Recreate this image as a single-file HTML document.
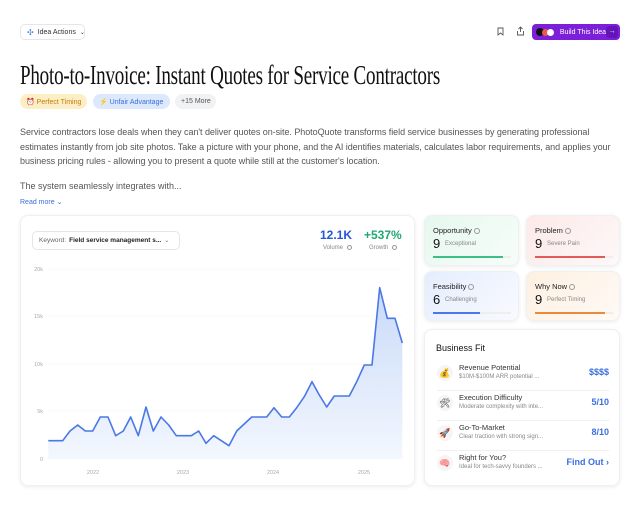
<!DOCTYPE html>
<html><head><meta charset="utf-8"><style>
*{margin:0;padding:0;box-sizing:border-box}
body{width:640px;height:506px;background:#fff;font-family:"Liberation Sans",sans-serif;position:relative;overflow:hidden;color:#222}
.a{position:absolute;white-space:nowrap}
.btn{border:1px solid #e3e6ea;border-radius:5px;background:#fff;font-size:7px;color:#333;display:flex;align-items:center;gap:4px;padding:0 6px;white-space:nowrap}
.tag{position:absolute;top:94px;height:15px;border-radius:8px;font-size:7px;display:flex;align-items:center;padding:0 6px;gap:3px;white-space:nowrap}
.card{position:absolute;border-radius:8px;box-shadow:0 1px 4px rgba(0,0,0,.08);border:1px solid #eef0f2}
.card .t{position:absolute;left:8px;top:10px;font-size:7.5px;color:#222;white-space:nowrap}
.card .n{position:absolute;left:8px;top:20px;font-size:13px;color:#111}
.card .s{position:absolute;left:20px;top:25px;font-size:6px;color:#888;white-space:nowrap}
.card .bar{position:absolute;left:8px;top:40px;width:78px;height:2px;background:#eee}
.card .bar i{display:block;height:2px}
.i{display:inline-block;width:6px;height:6px;border:0.7px solid #999;border-radius:50%;vertical-align:middle;margin-left:2px}
.row{position:absolute;left:12px;width:172px;height:30px;white-space:nowrap}
.row .ic{position:absolute;left:0;top:4px;width:16px;height:16px;border-radius:50%;background:#f5f5f5;font-size:9px;text-align:center;line-height:16px}
.row .h{position:absolute;left:22px;top:2px;font-size:7.5px;color:#333}
.row .d{position:absolute;left:22px;top:13px;font-size:6px;color:#888}
.row .v{position:absolute;right:0;top:6px;font-size:9px;color:#3b6fe0;font-weight:bold}
</style></head><body>
<div class="a btn" style="left:20px;top:24px;width:65px;height:16px"><span style="color:#4a7cf0;font-size:8px">✣</span>Idea Actions <span style="font-size:6px">⌄</span></div>
<svg class="a" style="left:496px;top:27px" width="9" height="9" viewBox="0 0 9 9"><path d="M2 1h5v7L4.5 6 2 8z" fill="none" stroke="#555" stroke-width=".9"/></svg>
<svg class="a" style="left:516px;top:26px" width="9" height="10" viewBox="0 0 9 10"><path d="M4.5 6V1M2.5 3l2-2 2 2M1.5 5v4h6V5" fill="none" stroke="#555" stroke-width=".9"/></svg>
<div class="a" style="left:532px;top:24px;width:88px;height:16px;background:#7b1fd9;border-radius:4px;color:#fff;font-size:7px;display:flex;align-items:center">
<span style="margin-left:4px;width:8px;height:8px;border-radius:50%;background:#111"></span><span style="width:7px;height:7px;border-radius:50%;background:#e55;margin-left:-2px"></span><span style="width:7px;height:7px;border-radius:50%;background:#fff;margin-left:-2px"></span>
<span style="margin-left:6px">Build This Idea</span><span style="margin-left:auto;margin-right:2px;width:12px;height:12px;background:#6414b8;border-radius:3px;text-align:center;line-height:12px">→</span></div>
<div class="a" style="left:20px;top:60px;font-family:'Liberation Serif',serif;font-size:27px;color:#111;transform:scaleX(0.705);transform-origin:left top;letter-spacing:-0.3px">Photo-to-Invoice: Instant Quotes for Service Contractors</div>
<div class="tag" style="left:20px;width:67px;background:#fcefc5;color:#c77a0a">⏰ Perfect Timing</div>
<div class="tag" style="left:93px;width:77px;background:#dce8fc;color:#3a6fd8">⚡ Unfair Advantage</div>
<div class="tag" style="left:175px;width:41px;background:#f1f2f4;color:#555">+15 More</div>
<div class="a" style="left:20px;top:125px;font-size:9px;line-height:14.5px;color:#555;letter-spacing:-0.05px">Service contractors lose deals when they can't deliver quotes on-site. PhotoQuote transforms field service businesses by generating professional<br>estimates instantly from job site photos. Take a picture with your phone, and the AI identifies materials, calculates labor requirements, and applies your<br>business pricing rules - allowing you to present a quote while still at the customer's location.</div>
<div class="a" style="left:20px;top:181px;font-size:9px;color:#555">The system seamlessly integrates with...</div>
<div class="a" style="left:20px;top:198px;font-size:7px;color:#3a6fd8">Read more ⌄</div>

<div class="card" style="left:20px;top:215px;width:395px;height:271px;background:#fff"></div>
<div class="a btn" style="left:32px;top:231px;width:148px;height:19px;font-size:6.5px;gap:3px"><span style="color:#666">Keyword:</span><b style="font-weight:bold;color:#222">Field service management s...</b><span style="font-size:6px;color:#777">⌄</span></div>
<div class="a" style="left:320px;top:228px;font-size:12px;font-weight:bold;color:#2457d6">12.1K</div>
<div class="a" style="left:323px;top:245px;font-size:6px;color:#888">Volume <span class="i" style="width:5px;height:5px"></span></div>
<div class="a" style="left:364px;top:228px;font-size:12px;font-weight:bold;color:#1fa870">+537%</div>
<div class="a" style="left:369px;top:245px;font-size:6px;color:#888">Growth <span class="i" style="width:5px;height:5px"></span></div>
<svg class="a" style="left:0;top:0" width="420" height="490">
<defs><linearGradient id="g" x1="0" y1="0" x2="0" y2="1"><stop offset="0" stop-color="#c8daf8"/><stop offset="1" stop-color="#f3f7fe"/></linearGradient></defs>
<g stroke="#f0f1f3" stroke-width=".6"><line x1="48" y1="269" x2="402" y2="269"/><line x1="48" y1="316" x2="402" y2="316"/><line x1="48" y1="364" x2="402" y2="364"/><line x1="48" y1="411" x2="402" y2="411"/></g>
<g font-size="5.5" fill="#aaa" text-anchor="end" font-family="Liberation Sans"><text x="43" y="271">20k</text><text x="43" y="318">15k</text><text x="43" y="366">10k</text><text x="43" y="413">5k</text><text x="43" y="461">0</text></g>
<g font-size="5.5" fill="#aaa" text-anchor="middle" font-family="Liberation Sans"><text x="93" y="474">2022</text><text x="183" y="474">2023</text><text x="273" y="474">2024</text><text x="364" y="474">2025</text></g>
<path d="M48.3 440.7L62.7 440.7L70 431L77.7 425L85.3 431L92.7 431L100.3 417L108 417L115.7 435.7L123.3 431L130.7 417L138.3 435.7L146 407L153.3 431L161 417L168.7 425L176.3 435.7L191.3 435.7L198.7 431L206 443.3L213.7 435.7L229 445.7L236.7 431L251.7 417L266.7 417L274 407.7L281.7 417L289.3 417L296.7 407.7L304.3 396.7L312 381.7L319.3 395L326.7 407L334.3 396L349.3 396L356.7 381.7L364.3 365L372 365L379.7 287.7L387.3 318.3L395 318.3L402.3 343L402.3 459L48.3 459Z" fill="url(#g)"/>
<path d="M48.3 440.7L62.7 440.7L70 431L77.7 425L85.3 431L92.7 431L100.3 417L108 417L115.7 435.7L123.3 431L130.7 417L138.3 435.7L146 407L153.3 431L161 417L168.7 425L176.3 435.7L191.3 435.7L198.7 431L206 443.3L213.7 435.7L229 445.7L236.7 431L251.7 417L266.7 417L274 407.7L281.7 417L289.3 417L296.7 407.7L304.3 396.7L312 381.7L319.3 395L326.7 407L334.3 396L349.3 396L356.7 381.7L364.3 365L372 365L379.7 287.7L387.3 318.3L395 318.3L402.3 343" fill="none" stroke="#4a78e6" stroke-width="1.6" stroke-linejoin="round"/>
</svg>

<div class="card" style="left:424px;top:215px;width:95px;height:51px;background:linear-gradient(135deg,#e6f8ee,#f7fdf9)"><div class="t">Opportunity<span class="i"></span></div><div class="n">9</div><div class="s">Exceptional</div><div class="bar"><i style="width:70px;background:#3cbf86"></i></div></div>
<div class="card" style="left:526px;top:215px;width:94px;height:51px;background:linear-gradient(135deg,#fde9e9,#fdf8f8)"><div class="t">Problem<span class="i"></span></div><div class="n">9</div><div class="s">Severe Pain</div><div class="bar"><i style="width:70px;background:#e25b5b"></i></div></div>
<div class="card" style="left:424px;top:271px;width:95px;height:50px;background:linear-gradient(135deg,#e5edfd,#f8faff)"><div class="t">Feasibility<span class="i"></span></div><div class="n">6</div><div class="s">Challenging</div><div class="bar"><i style="width:47px;background:#4a78e6"></i></div></div>
<div class="card" style="left:526px;top:271px;width:94px;height:50px;background:linear-gradient(135deg,#fdf0e2,#fffaf5)"><div class="t">Why Now<span class="i"></span></div><div class="n">9</div><div class="s">Perfect Timing</div><div class="bar"><i style="width:70px;background:#ea8a3a"></i></div></div>

<div class="card" style="left:424px;top:329px;width:196px;height:157px;background:#fff">
<div class="a" style="left:11px;top:13px;font-size:9px;color:#111">Business Fit</div>
<div class="row" style="top:31px;border-bottom:1px solid #f0f0f0"><div class="ic">💰</div><div class="h">Revenue Potential</div><div class="d">$10M-$100M ARR potential ...</div><div class="v">$$$$</div></div>
<div class="row" style="top:61px;border-bottom:1px solid #f0f0f0"><div class="ic">🛠</div><div class="h">Execution Difficulty</div><div class="d">Moderate complexity with inte...</div><div class="v">5/10</div></div>
<div class="row" style="top:91px;border-bottom:1px solid #f0f0f0"><div class="ic">🚀</div><div class="h">Go-To-Market</div><div class="d">Clear traction with strong sign...</div><div class="v">8/10</div></div>
<div class="row" style="top:121px"><div class="ic">🧠</div><div class="h">Right for You?</div><div class="d">Ideal for tech-savvy founders ...</div><div class="v">Find Out ›</div></div>
</div>
</body></html>
